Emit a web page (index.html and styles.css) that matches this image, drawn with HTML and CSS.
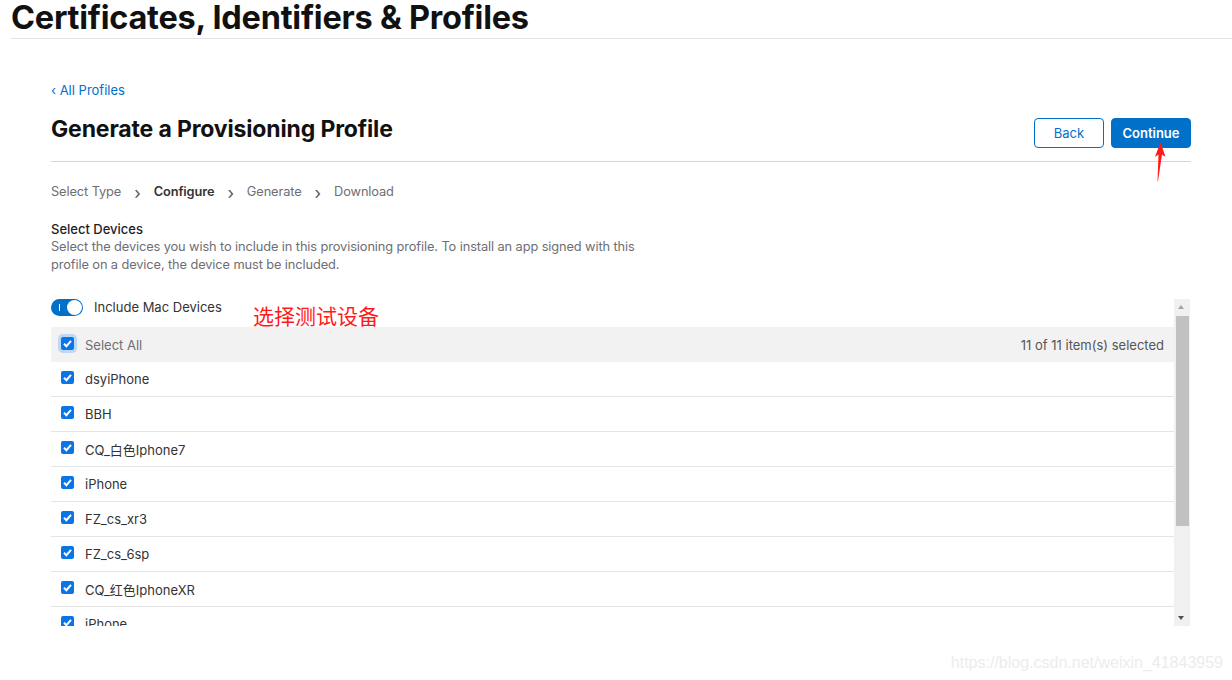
FILE: index.html
```html
<!DOCTYPE html>
<html lang="en">
<head>
  <meta charset="UTF-8">
  <title>Certificates, Identifiers &amp; Profiles</title>
  <link rel="stylesheet" href="styles.css">
</head>
<body>
  <header class="page-head">
    <h1>Certificates, Identifiers &amp; Profiles</h1>
  </header>

  <main class="content">
    <a class="back-link" href="#">&lsaquo; All Profiles</a>

    <div class="title-row">
      <h2>Generate a Provisioning Profile</h2>
      <div class="actions">
        <button class="btn btn-outline">Back</button>
        <button class="btn btn-primary">Continue</button>
        <!-- red annotation arrow -->
        <svg class="arrow" width="12" height="40" viewBox="0 0 12 40">
          <path d="M6.5 0 L11.5 15 L8 12.5 L4 39 L3.5 39 L4.5 12.5 L1 15 Z" fill="#ff1a1a"/>
        </svg>
      </div>
    </div>

    <nav class="steps">
      <span>Select Type</span>
      <span class="sep">&rsaquo;</span>
      <span class="current">Configure</span>
      <span class="sep">&rsaquo;</span>
      <span>Generate</span>
      <span class="sep">&rsaquo;</span>
      <span>Download</span>
    </nav>

    <section class="intro">
      <h3>Select Devices</h3>
      <p>Select the devices you wish to include in this provisioning profile. To install an app signed with this profile on a device, the device must be included.</p>
    </section>

    <div class="device-box">
      <div class="device-scroll">
        <div class="toggle-row">
          <span class="switch"><span class="knob"></span></span>
          <span>Include Mac Devices</span>
          <span class="note">选择测试设备</span>
        </div>

        <div class="list-head">
          <label class="check-cell"><span class="check focus"></span>Select All</label>
          <span class="count">11 of 11 item(s) selected</span>
        </div>

        <ul class="devices">
          <li><span class="check"></span>dsyiPhone</li>
          <li><span class="check"></span>BBH</li>
          <li><span class="check"></span>CQ_白色Iphone7</li>
          <li><span class="check"></span>iPhone</li>
          <li><span class="check"></span>FZ_cs_xr3</li>
          <li><span class="check"></span>FZ_cs_6sp</li>
          <li><span class="check"></span>CQ_红色IphoneXR</li>
          <li><span class="check"></span>iPhone</li>
        </ul>
      </div>

      <div class="scrollbar">
        <span class="sb-arrow up"></span>
        <span class="sb-track"><span class="sb-thumb"></span></span>
        <span class="sb-arrow down"></span>
      </div>
    </div>
  </main>

  <div class="watermark">https://blog.csdn.net/weixin_41843959</div>
</body>
</html>
```

FILE: styles.css
```css
body {
  margin: 0;
  font-family: Inter, "Noto Sans CJK SC", sans-serif;
  color: #1d1d1f;
  background-color: #fff;
  height: 680px;
  overflow: hidden;
  position: relative;
}

.page-head {
  padding-left: 11px;
}

.page-head h1 {
  margin: 0;
  font-size: 32.5px;
  font-weight: 700;
  letter-spacing: -0.25px;
  line-height: 36px;
  padding-bottom: 2px;
  border-bottom: 1px solid #e3e3e3;
  color: #111;
}

.content {
  padding: 40px 41px 0 51px;
}

.back-link {
  display: inline-block;
  font-size: 13px;
  line-height: 16px;
  color: #0070c9;
  text-decoration: none;
}

.title-row {
  display: flex;
  justify-content: space-between;
  align-items: flex-start;
  margin-top: 15px;
  padding-bottom: 13px;
  border-bottom: 1px solid #d6d6d6;
}

.title-row h2 {
  margin: 0;
  font-size: 23px;
  font-weight: 700;
  letter-spacing: -0.15px;
  line-height: 30px;
  color: #111;
}

.actions {
  display: flex;
  gap: 7px;
  margin-top: 4px;
  position: relative;
}

.btn {
  height: 30px;
  border-radius: 4px;
  font-family: inherit;
  font-size: 13px;
  padding: 0;
  cursor: pointer;
}

.btn-outline {
  width: 70px;
  background-color: #fff;
  border: 1px solid #0070c9;
  color: #0070c9;
}

.btn-primary {
  width: 80px;
  background-color: #0070c9;
  border: 1px solid #0070c9;
  color: #fff;
  font-weight: 600;
}

.arrow {
  position: absolute;
  left: 120px;
  top: 24px;
}

.steps {
  display: flex;
  align-items: center;
  gap: 13px;
  margin-top: 19px;
  font-size: 12.8px;
  letter-spacing: -0.1px;
  line-height: 18px;
  color: #6e6e73;
}

.steps .sep {
  font-size: 17px;
  color: #555;
  padding-top: 3px;
}

.steps .current {
  font-weight: 600;
  color: #333;
}

.intro {
  margin-top: 18px;
  width: 605px;
}

.intro h3 {
  margin: 0;
  font-size: 13px;
  font-weight: 500;
  line-height: 18px;
  color: #1d1d1f;
}

.intro p {
  margin: 0;
  font-size: 12.8px;
  letter-spacing: -0.1px;
  line-height: 18px;
  color: #6e6e73;
}

.device-box {
  display: flex;
  margin: 25px 1px 0 0;
  height: 327px;
}

.device-scroll {
  flex: 1;
  overflow: hidden;
}

.toggle-row {
  display: flex;
  align-items: flex-start;
  gap: 11px;
  height: 28px;
  font-size: 13px;
  line-height: 16px;
  color: #333;
  position: relative;
}

.switch {
  width: 32px;
  height: 17px;
  border-radius: 9px;
  background-color: #0070c9;
  position: relative;
  flex: none;
}

.switch::before {
  content: "";
  position: absolute;
  left: 8px;
  top: 5px;
  width: 1px;
  height: 7px;
  background-color: #fff;
}

.switch .knob {
  position: absolute;
  right: 1px;
  top: 1px;
  width: 15px;
  height: 15px;
  border-radius: 50%;
  background-color: #fff;
}

.note {
  position: absolute;
  left: 202px;
  top: 2px;
  font-size: 21px;
  line-height: 28px;
  color: #ff1a1a;
  font-family: "Noto Sans CJK SC", sans-serif;
}

.list-head {
  display: flex;
  justify-content: space-between;
  align-items: center;
  height: 35px;
  padding: 0 10px;
  background-color: #f2f2f2;
  font-size: 13px;
  color: #6e6e73;
}

.check-cell {
  display: flex;
  align-items: center;
  gap: 11px;
}

.count {
  color: #555;
}

.check {
  display: inline-block;
  width: 13px;
  height: 13px;
  border-radius: 2px;
  background-color: #0a75e6;
  background-image: url("data:image/svg+xml,%3Csvg xmlns='http://www.w3.org/2000/svg' viewBox='0 0 13 13'%3E%3Cpath d='M3 6.8 L5.4 9.2 L10 3.8' fill='none' stroke='%23fff' stroke-width='2'/%3E%3C/svg%3E");
  flex: none;
  margin-top: -3px;
}

.check.focus {
  box-shadow: 0 0 0 3px #bcd8f5;
}

.devices {
  list-style: none;
  margin: 0;
  padding: 0;
}

.devices li {
  display: flex;
  align-items: center;
  gap: 11px;
  height: 34px;
  padding: 0 10px;
  border-bottom: 1px solid #e6e6e6;
  font-size: 13px;
  color: #333;
}

.scrollbar {
  width: 16px;
  display: flex;
  flex-direction: column;
  background-color: #f0f0f0;
}

.sb-arrow {
  height: 17px;
  position: relative;
}

.sb-arrow::after {
  content: "";
  position: absolute;
  left: 4px;
  border-left: 3.5px solid transparent;
  border-right: 3.5px solid transparent;
}

.sb-arrow.up::after {
  top: 6px;
  border-bottom: 4px solid #a3a3a3;
}

.sb-arrow.down::after {
  top: 7px;
  border-top: 4px solid #505050;
}

.sb-track {
  flex: 1;
  position: relative;
}

.sb-thumb {
  position: absolute;
  left: 2px;
  right: 1px;
  top: 0;
  height: 210px;
  background-color: #c1c1c1;
}

.watermark {
  position: absolute;
  right: 9px;
  bottom: 8px;
  font-family: "Liberation Sans", Arial, sans-serif;
  font-size: 16px;
  color: #ececec;
}
```
